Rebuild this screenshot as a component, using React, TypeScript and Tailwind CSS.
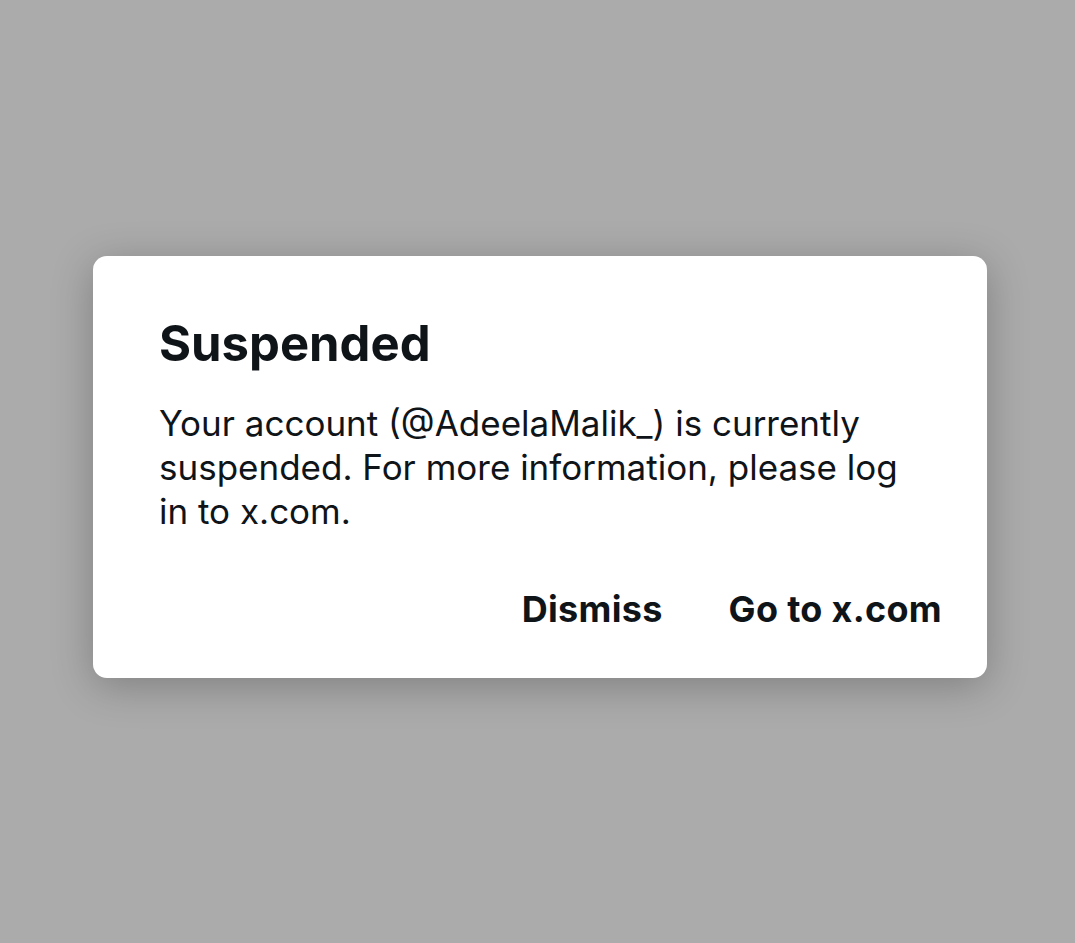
export default function App() {
  return (
    <div
      className="min-h-screen w-full bg-[#ababab] flex items-center justify-center pl-[5px] pb-[9px]"
      style={{ fontFamily: 'Inter, "Noto Sans", sans-serif' }}
    >
      <div className="w-[894px] h-[422px] bg-white rounded-[14px] shadow-[0_8px_40px_rgba(0,0,0,0.25)] pl-[66px] pr-[45px] pt-[60px] flex flex-col text-[#0f1419]">
        <h1 className="text-[49px] leading-[56px] font-bold">Suspended</h1>
        <p className="mt-[29px] text-[35px] leading-[44px] pr-[20px]">
          Your account (@AdeelaMalik_) is currently suspended. For more information, please log in to x.com.
        </p>
        <div className="mt-[54px] flex justify-end gap-[66px] text-[36px] leading-[44px] font-bold tracking-[0.3px]">
          <button>Dismiss</button>
          <button>Go to x.com</button>
        </div>
      </div>
    </div>
  );
}
